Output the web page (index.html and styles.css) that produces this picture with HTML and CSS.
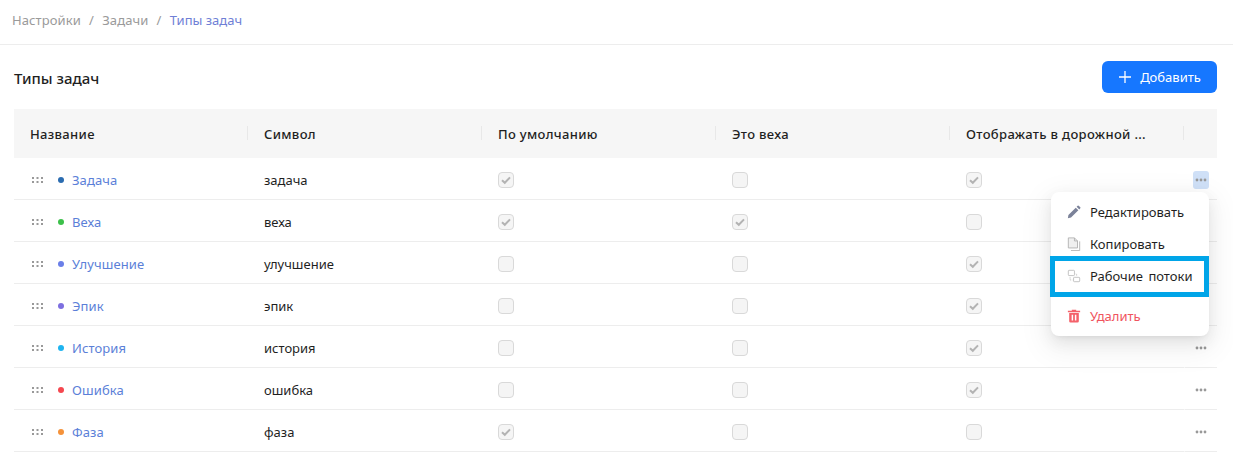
FILE: index.html
```html
<!DOCTYPE html>
<html lang="ru">
<head>
<meta charset="utf-8">
<title>Типы задач</title>
<link rel="stylesheet" href="styles.css">
</head>
<body>
<svg class="defs" width="0" height="0" aria-hidden="true">
  <symbol id="grip" viewBox="0 0 11 6"><g fill="#999"><rect x="0" y="0" width="2" height="2"/><rect x="4.500" y="0" width="2" height="2"/><rect x="9" y="0" width="2" height="2"/><rect x="0" y="4" width="2" height="2"/><rect x="4.500" y="4" width="2" height="2"/><rect x="9" y="4" width="2" height="2"/></g></symbol>
  <symbol id="dots" viewBox="0 0 12 4"><g fill="#999"><circle cx="2" cy="2" r="1.400"/><circle cx="6" cy="2" r="1.400"/><circle cx="10" cy="2" r="1.400"/></g></symbol>
  <symbol id="tick" viewBox="0 0 16 16"><path d="M4 8.200l2.800 2.600L12 5.400" fill="none" stroke="#b3b3b3" stroke-width="2"/></symbol>
</svg>
<nav class="crumbs"><span>Настройки</span><i>/</i><span>Задачи</span><i>/</i><span class="current">Типы задач</span></nav>
<main class="page">
  <div class="head">
    <h1>Типы задач</h1>
    <button class="add"><svg width="14" height="14" viewBox="0 0 14 14"><path d="M7 1v12M1 7h12" stroke="#fff" stroke-width="1.300" fill="none"/></svg>Добавить</button>
  </div>
  <table class="grid">
    <thead>
      <tr><th><span>Название</span></th><th><span>Символ</span></th><th><span>По умолчанию</span></th><th><span>Это веха</span></th><th><span>Отображать в дорожной ...</span></th><th></th></tr>
    </thead>
    <tbody>
      <tr><td><div class="name"><svg class="grip"><use href="#grip"/></svg><b class="dot c1"></b><a>Задача</a></div></td><td>задача</td><td><em class="box"><svg><use href="#tick"/></svg></em></td><td><em class="box"></em></td><td><em class="box"><svg><use href="#tick"/></svg></em></td><td class="act"><span class="more open"><svg><use href="#dots"/></svg></span></td></tr>
      <tr><td><div class="name"><svg class="grip"><use href="#grip"/></svg><b class="dot c2"></b><a>Веха</a></div></td><td>веха</td><td><em class="box"><svg><use href="#tick"/></svg></em></td><td><em class="box"><svg><use href="#tick"/></svg></em></td><td><em class="box"></em></td><td class="act"><span class="more"><svg><use href="#dots"/></svg></span></td></tr>
      <tr><td><div class="name"><svg class="grip"><use href="#grip"/></svg><b class="dot c3"></b><a>Улучшение</a></div></td><td>улучшение</td><td><em class="box"></em></td><td><em class="box"></em></td><td><em class="box"><svg><use href="#tick"/></svg></em></td><td class="act"><span class="more"><svg><use href="#dots"/></svg></span></td></tr>
      <tr><td><div class="name"><svg class="grip"><use href="#grip"/></svg><b class="dot c4"></b><a>Эпик</a></div></td><td>эпик</td><td><em class="box"></em></td><td><em class="box"></em></td><td><em class="box"><svg><use href="#tick"/></svg></em></td><td class="act"><span class="more"><svg><use href="#dots"/></svg></span></td></tr>
      <tr><td><div class="name"><svg class="grip"><use href="#grip"/></svg><b class="dot c5"></b><a>История</a></div></td><td>история</td><td><em class="box"></em></td><td><em class="box"></em></td><td><em class="box"><svg><use href="#tick"/></svg></em></td><td class="act"><span class="more"><svg><use href="#dots"/></svg></span></td></tr>
      <tr><td><div class="name"><svg class="grip"><use href="#grip"/></svg><b class="dot c6"></b><a>Ошибка</a></div></td><td>ошибка</td><td><em class="box"></em></td><td><em class="box"></em></td><td><em class="box"><svg><use href="#tick"/></svg></em></td><td class="act"><span class="more"><svg><use href="#dots"/></svg></span></td></tr>
      <tr><td><div class="name"><svg class="grip"><use href="#grip"/></svg><b class="dot c7"></b><a>Фаза</a></div></td><td>фаза</td><td><em class="box"><svg><use href="#tick"/></svg></em></td><td><em class="box"></em></td><td><em class="box"></em></td><td class="act"><span class="more"><svg><use href="#dots"/></svg></span></td></tr>
    </tbody>
  </table>
</main>
<ul class="menu">
  <li><svg viewBox="0 0 16 16"><path d="M1 15l.6-3.600L10 3l3 3-8.400 8.400zM11 2l1.200-1.200a.8.8 0 0 1 1.100 0l1.900 1.900a.8.8 0 0 1 0 1.100L14 5z" fill="#7b8299"/></svg>Редактировать</li>
  <li><svg viewBox="0 0 16 16"><path d="M1.500 1h7l3.500 3.500V12.500h-10.500z" fill="#f0f0f0" stroke="#b0b0b0"/><path d="M14.500 5v10.500h-10" fill="none" stroke="#b0b0b0"/><path d="M8.500 1v3.500h3.500" fill="none" stroke="#b0b0b0"/></svg>Копировать</li>
  <li class="flow"><svg viewBox="0 0 16 16"><g fill="none" stroke="#bdbdbd"><rect x="1.500" y="1.500" width="7" height="6" rx=".8"/><rect x="7.500" y="9.500" width="7" height="5" rx=".8"/><path d="M3.500 9.500v3h2.500M11 7.500V5.500h-1" stroke-dasharray="1.500 1"/></g></svg>Рабочие потоки</li>
  <li class="danger"><svg viewBox="0 0 16 16"><path d="M5.500 2V.8h5V2h4.500v1.700H1V2zM2.500 4.500h11V14a1.500 1.500 0 0 1-1.500 1.500H4A1.500 1.500 0 0 1 2.500 14zM5.300 6.500v6.500h1.700V6.500zM9 6.500v6.500h1.700V6.500z" fill="#f4616a" fill-rule="evenodd"/></svg>Удалить</li>
</ul>
</body>
</html>
```

FILE: styles.css
```css
* { box-sizing: border-box; }
html, body { margin: 0; padding: 0; }
body { position: relative; width: 1233px; height: 455px; overflow: hidden; background: #fff; font: 13px/20px "Noto Sans", sans-serif; color: #1f1f1f; }
.defs { position: absolute; }
.crumbs { height: 45px; padding: 0 12px 5px; display: flex; align-items: center; gap: 8.200px; border-bottom: 1px solid #ededed; color: #9a9a9a; letter-spacing: .1px; }
.crumbs i { font-style: normal; }
.crumbs .current { color: #6f7fd6; letter-spacing: 0; }
.page { padding: 0 16px 0 14px; }
.head { height: 64px; display: flex; align-items: center; justify-content: space-between; }
h1 { margin: 0; padding-top: 2px; font-size: 15px; font-weight: 500; color: #1f1f1f; }
.add { width: 115px; height: 32px; border: 0; border-radius: 6px; background: #1677ff; color: #fff; font: inherit; display: flex; align-items: center; justify-content: center; gap: 8px; }
.grid { width: 1203px; border-collapse: separate; border-spacing: 0; table-layout: fixed; }
th { height: 49px; background: #f6f6f6; text-align: left; padding: 0; font-weight: 500; width: 234px; position: relative; letter-spacing: .33px; white-space: nowrap; }
th:last-child { width: 33px; }
th span { display: block; padding: 0 16px; }
th + th::before { content: ""; position: absolute; left: -1px; top: 17px; height: 14px; width: 1px; background: #e8e8e8; }
td { height: 42px; padding: 2px 16px 0; border-bottom: 1px solid #ededed; }
td.act { border-left: 1px solid #fff; padding: 0; text-align: center; }
.name { display: flex; align-items: center; }
.grip { width: 11px; height: 6px; margin: 0 15px 0 2px; flex: none; }
.dot { width: 6px; height: 6px; border-radius: 50%; margin-right: 8px; flex: none; }
.c1 { background: #2b6cb0; } .c2 { background: #3cc04a; } .c3 { background: #6a7fe8; } .c4 { background: #7d6fe0; }
.c5 { background: #1eb4f0; } .c6 { background: #f5474f; } .c7 { background: #f5923a; }
.name a { color: #5b7fd8; letter-spacing: .1px; }
.box { display: block; width: 16px; height: 16px; border: 1px solid #d9d9d9; border-radius: 4px; background: #f5f5f5; position: relative; }
.box svg { position: absolute; left: -1px; top: -1px; width: 16px; height: 16px; }
.more { display: inline-flex; width: 16px; height: 18px; align-items: center; justify-content: center; border-radius: 3px; vertical-align: middle; }
.more svg { width: 12px; height: 4px; }
.more.open { background: #cfe0f7; }
.menu { position: absolute; left: 1051px; top: 192px; width: 158px; height: 144px; margin: 0; padding: 4px 0; list-style: none; background: #fff; border-radius: 8px; box-shadow: 0 6px 16px rgba(0,0,0,.08), 0 3px 6px -4px rgba(0,0,0,.12), 0 9px 28px 8px rgba(0,0,0,.05); }
.menu li { height: 32px; display: flex; align-items: center; gap: 9px; padding-left: 16px; color: #1f1f1f; white-space: nowrap; word-spacing: 2px; }
.menu li svg { width: 14px; height: 14px; flex: none; }
.menu .flow { position: relative; }
.menu .flow::after { content: ""; position: absolute; left: -1px; right: 0; top: 0; bottom: 0; margin-top: -4px; margin-bottom: -5px; border: 5px solid #00a5e8; }
.menu .danger { color: #f0545e; margin-top: 8px; }
```
